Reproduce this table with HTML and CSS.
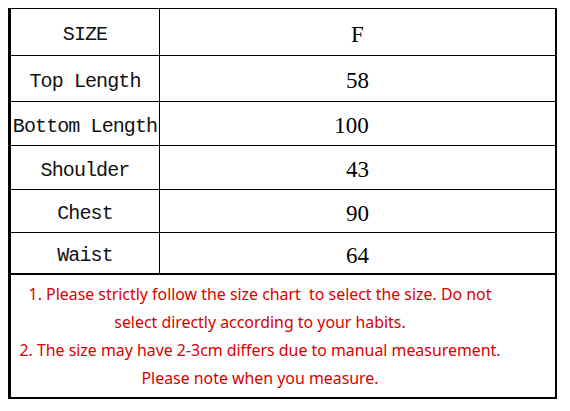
FILE: index.html
```html
<!DOCTYPE html>
<html>
<head>
<meta charset="utf-8">
<link rel="stylesheet" href="styles.css">
</head>
<body>
<div class="chart">
  <div class="row r1"><div class="label">SIZE</div><div class="value">F</div></div>
  <div class="row r2"><div class="label">Top Length</div><div class="value">58</div></div>
  <div class="row r3"><div class="label">Bottom Length</div><div class="value shift">100</div></div>
  <div class="row r4"><div class="label">Shoulder</div><div class="value">43</div></div>
  <div class="row r5"><div class="label">Chest</div><div class="value">90</div></div>
  <div class="row r6"><div class="label">Waist</div><div class="value">64</div></div>
  <div class="notes">
    <p>1. Please strictly follow the size chart&nbsp; to select the size. Do not select directly according to your habits.</p>
    <p>2. The size may have 2-3cm differs due to manual measurement. Please note when you measure.</p>
  </div>
</div>
</body>
</html>
```
FILE: styles.css
```css
html, body {
  margin: 0;
  padding: 0;
  background: #fff;
}
.chart {
  margin: 8px 0 0 8px;
  width: 544px;
  border-top: 1px solid #000;
  border-left: 3px solid #000;
  border-right: 2px solid #000;
  border-bottom: 2px solid #000;
  display: flex;
  flex-direction: column;
}
.row {
  display: grid;
  grid-template-columns: 149px 1fr;
  border-bottom: 1px solid #000;
}
.r1 { height: 46px; }
.r2 { height: 45px; }
.r3 { height: 43px; }
.r4 { height: 43px; }
.r5 { height: 42px; }
.r6 { height: 40px; border-bottom-width: 2px; }
.label {
  border-right: 1px solid #000;
  display: flex;
  align-items: center;
  justify-content: center;
  padding-top: 5px;
  font-family: "Liberation Mono", monospace;
  font-size: 20px;
  letter-spacing: -0.9px;
  font-weight: normal;
  color: #111;
  white-space: nowrap;
}
.value {
  display: flex;
  align-items: center;
  justify-content: center;
  padding-top: 5px;
  font-family: "Liberation Serif", serif;
  font-size: 23px;
  color: #000;
}
.value.shift {
  padding-right: 12px;
}
.notes {
  height: 122px;
  display: flex;
  flex-direction: column;
  justify-content: center;
  font-family: "Noto Sans", sans-serif;
  font-size: 15.9px;
  line-height: 28px;
  color: #d80000;
  text-align: center;
  padding: 0 50px 0 4px;
}
.notes p {
  margin: 0;
}
```
